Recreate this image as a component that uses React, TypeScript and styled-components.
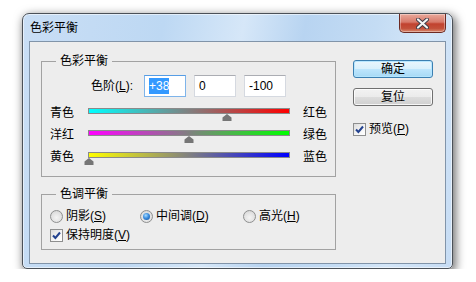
import styled, { createGlobalStyle } from 'styled-components';

const GlobalStyle = createGlobalStyle`
  html, body {
    margin: 0;
    padding: 0;
    background: #fff;
  }
  body {
    font-family: 'Liberation Sans', 'Noto Sans CJK SC', sans-serif;
    font-size: 12px;
    color: #000;
  }
`;

const Page = styled.div`
  padding: 13px 0 0 22px;
`;

const Window = styled.div`
  width: 431px;
  height: 256px;
  box-sizing: border-box;
  display: flex;
  flex-direction: column;
  border: 1px solid #4b5158;
  border-radius: 7px 7px 5px 5px;
  background: linear-gradient(
    100deg,
    #c9def5 0%,
    #bdd8f3 30%,
    #d6e7f8 47%,
    #b8d4f1 60%,
    #c4dcf4 75%,
    #d4e6f8 86%,
    #c6dcf4 100%
  );
  box-shadow: 2px 3px 10px 1px rgba(0, 0, 0, 0.55), inset 0 0 0 1px rgba(255, 255, 255, 0.55);
`;

const TitleBar = styled.div`
  height: 27px;
  flex: none;
  display: flex;
  align-items: flex-start;
`;

const Title = styled.div`
  margin: 7px 0 0 7px;
  line-height: 14px;
`;

const CloseButton = styled.div`
  margin: 0 6px 0 auto;
  width: 47px;
  height: 19px;
  box-sizing: border-box;
  display: flex;
  align-items: center;
  justify-content: center;
  border: 1px solid #6d2a22;
  border-top: none;
  border-radius: 0 0 5px 5px;
  background: linear-gradient(
    to bottom,
    #e9a99b 0%,
    #d7796a 45%,
    #c1422f 55%,
    #c3503a 80%,
    #d98a6e 100%
  );
  box-shadow: inset 0 0 0 1px rgba(255, 255, 255, 0.35);
`;

const Client = styled.div`
  flex: 1;
  margin: 0 6px 4px 6px;
  display: flex;
  padding-left: 11px;
  border: 1px solid #8194a9;
  background: #ededed;
`;

const LeftColumn = styled.div`
  width: 295px;
  padding-top: 19px;
`;

const RightColumn = styled.div`
  width: 80px;
  margin-left: 17px;
  padding-top: 18px;
  display: flex;
  flex-direction: column;
`;

const Group = styled.div<{ $top?: number; $bottom: number }>`
  box-sizing: border-box;
  margin-top: ${({ $top }) => $top ?? 0}px;
  padding-bottom: ${({ $bottom }) => $bottom}px;
  border: 1px solid #a2a2a2;
`;

const Legend = styled.div`
  width: fit-content;
  margin: -7px 0 0 14px;
  padding: 0 4px;
  line-height: 13px;
  background: #ededed;
`;

const LevelRow = styled.div`
  display: flex;
  align-items: center;
  gap: 8px;
  margin-top: 7px;
  padding-left: 49px;
`;

const LevelLabel = styled.div`
  width: 45px;
  line-height: 14px;
`;

const Field = styled.div<{ $focused?: boolean }>`
  width: 42px;
  height: 22px;
  box-sizing: border-box;
  padding-left: 4px;
  line-height: 20px;
  background: #fff;
  border: 1px solid ${({ $focused }) => ($focused ? '#7eb4ea' : '#d5d9e0')};
  border-top-color: ${({ $focused }) => ($focused ? '#569de5' : '#abadb3')};
`;

const Selected = styled.span`
  padding: 1px 0;
  background: #3399ff;
  color: #fff;
`;

const SliderList = styled.div`
  margin-top: 9px;
  padding-left: 8px;
`;

const SliderRow = styled.div`
  display: grid;
  grid-template-columns: 38px 202px auto;
  height: 22px;
`;

const SideLabel = styled.div`
  line-height: 14px;
`;

const RightLabel = styled(SideLabel)`
  margin-left: 13px;
`;

const Track = styled.div<{ $from: string; $to: string }>`
  position: relative;
  height: 6px;
  margin-top: 2px;
  box-sizing: border-box;
  border: 1px solid #8a8a8a;
  background: linear-gradient(to right, ${({ $from }) => $from}, #808080 50%, ${({ $to }) => $to});
`;

const Thumb = styled.svg`
  position: absolute;
  top: calc(100% + 1px);
  margin-left: -5px;
  display: block;
`;

const RadioRow = styled.div`
  display: grid;
  grid-template-columns: 90px 103px auto;
  margin-top: 7px;
  padding-left: 8px;
`;

const Option = styled.div<{ $gap?: number }>`
  display: flex;
  align-items: center;
  gap: 3px;
  height: 16px;
  margin-top: ${({ $gap }) => $gap ?? 0}px;
  line-height: 14px;
`;

const CheckRow = styled.div`
  margin-top: 3px;
  padding-left: 8px;
`;

const RadioDot = styled.span<{ $checked?: boolean }>`
  width: 13px;
  height: 13px;
  box-sizing: border-box;
  flex: none;
  border-radius: 50%;
  border: 1px solid #8e8f8f;
  display: flex;
  align-items: center;
  justify-content: center;
  background: radial-gradient(circle at 50% 60%, #f4f4f4 0%, #e2e2e2 55%, #cfcfcf 100%);

  &::after {
    content: '';
    display: ${({ $checked }) => ($checked ? 'block' : 'none')};
    width: 7px;
    height: 7px;
    border-radius: 50%;
    background: radial-gradient(circle at 40% 35%, #a8dcff 0%, #3c8ee0 45%, #0f4a94 100%);
  }
`;

const Box = styled.span`
  width: 13px;
  height: 13px;
  box-sizing: border-box;
  flex: none;
  border: 1px solid #8e8f8f;
  background: linear-gradient(135deg, #dcdcdc 0%, #f6f6f6 60%, #ffffff 100%);
  display: flex;
  align-items: center;
  justify-content: center;
`;

const Button = styled.div<{ $primary?: boolean }>`
  height: 18px;
  box-sizing: border-box;
  display: flex;
  align-items: center;
  justify-content: center;
  line-height: 14px;
  border-radius: 3px;
  border: 1px solid ${({ $primary }) => ($primary ? '#3c7fb1' : '#707070')};
  background: ${({ $primary }) =>
    $primary
      ? 'linear-gradient(to bottom, #eaf6fd 0%, #d9f0fc 50%, #bee6fd 51%, #a7d9f5 100%)'
      : 'linear-gradient(to bottom, #f2f2f2 0%, #ebebeb 50%, #dddddd 51%, #cfcfcf 100%)'};
  box-shadow: inset 0 0 0 1px ${({ $primary }) => ($primary ? 'rgba(180, 230, 255, 0.9)' : 'rgba(255, 255, 255, 0.8)')};

  & + & {
    margin-top: 10px;
  }
`;

const Key = styled.span`
  text-decoration: underline;
  text-underline-offset: 1px;
`;

const CheckMark = () => (
  <svg width="9" height="9" viewBox="0 0 9 9">
    <path d="M1 4.5 L3.4 7 L8 1.5" fill="none" stroke="#23428f" strokeWidth="2" />
  </svg>
);

const ThumbShape = ({ value }: { value: number }) => (
  <Thumb width="10" height="7" viewBox="0 0 10 7" style={{ left: `${(value + 100) / 2}%` }}>
    <path d="M5 0 L9.5 3.5 L9.5 7 L0.5 7 L0.5 3.5 Z" fill="#767676" />
  </Thumb>
);

const sliders = [
  { left: '青色', right: '红色', from: '#00ffff', to: '#ff0000', value: 38 },
  { left: '洋红', right: '绿色', from: '#ff00ff', to: '#00ff00', value: 0 },
  { left: '黄色', right: '蓝色', from: '#ffff00', to: '#0000ff', value: -100 },
];

const App = () => {
  return (
    <Page>
      <GlobalStyle />
      <Window>
        <TitleBar>
          <Title>色彩平衡</Title>
          <CloseButton>
            <svg width="13" height="11" viewBox="0 0 13 11">
              <path d="M2 1.5 L11 9.5 M11 1.5 L2 9.5" stroke="#3b3b46" strokeWidth="4" strokeLinecap="round" />
              <path d="M2 1.5 L11 9.5 M11 1.5 L2 9.5" stroke="#f4f4f4" strokeWidth="2.2" strokeLinecap="round" />
            </svg>
          </CloseButton>
        </TitleBar>
        <Client>
          <LeftColumn>
            <Group $bottom={4}>
              <Legend>色彩平衡</Legend>
              <LevelRow>
                <LevelLabel>
                  色阶(<Key>L</Key>):
                </LevelLabel>
                <Field $focused>
                  <Selected>+38</Selected>
                </Field>
                <Field>0</Field>
                <Field>-100</Field>
              </LevelRow>
              <SliderList>
                {sliders.map((s) => (
                  <SliderRow key={s.left}>
                    <SideLabel>{s.left}</SideLabel>
                    <Track $from={s.from} $to={s.to}>
                      <ThumbShape value={s.value} />
                    </Track>
                    <RightLabel>{s.right}</RightLabel>
                  </SliderRow>
                ))}
              </SliderList>
            </Group>
            <Group $top={17} $bottom={6}>
              <Legend>色调平衡</Legend>
              <RadioRow>
                <Option>
                  <RadioDot />
                  <span>
                    阴影(<Key>S</Key>)
                  </span>
                </Option>
                <Option>
                  <RadioDot $checked />
                  <span>
                    中间调(<Key>D</Key>)
                  </span>
                </Option>
                <Option>
                  <RadioDot />
                  <span>
                    高光(<Key>H</Key>)
                  </span>
                </Option>
              </RadioRow>
              <CheckRow>
                <Option>
                  <Box>
                    <CheckMark />
                  </Box>
                  <span>
                    保持明度(<Key>V</Key>)
                  </span>
                </Option>
              </CheckRow>
            </Group>
          </LeftColumn>
          <RightColumn>
            <Button $primary>确定</Button>
            <Button>复位</Button>
            <Option $gap={15}>
              <Box>
                <CheckMark />
              </Box>
              <span>
                预览(<Key>P</Key>)
              </span>
            </Option>
          </RightColumn>
        </Client>
      </Window>
    </Page>
  );
};

export default App;
